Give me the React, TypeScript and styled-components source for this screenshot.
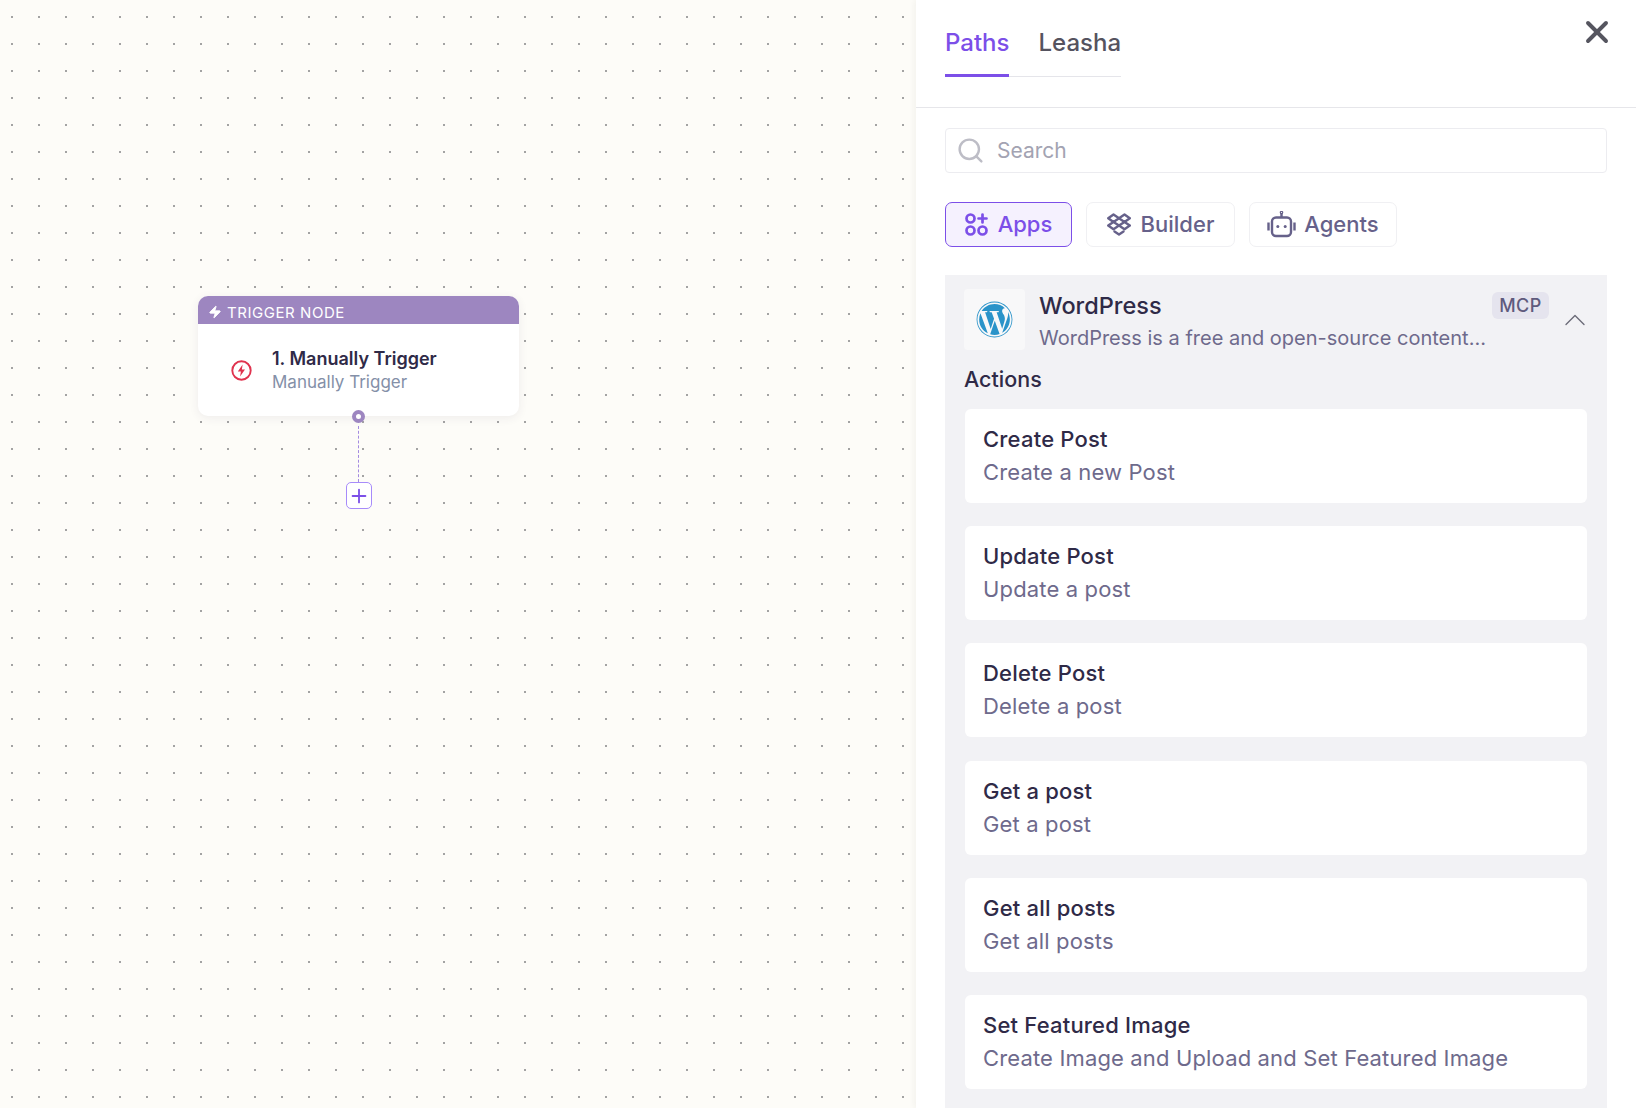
import styled, { createGlobalStyle } from 'styled-components'
import { Search, X, Zap, ChevronUp, Plus } from 'lucide-react'
import { FaWordpress } from 'react-icons/fa'

const GlobalStyle = createGlobalStyle`
    html, body {
        margin: 0;
        padding: 0;
        height: 100%;
        overflow: hidden;
    }
    body {
        font-family: Inter, "Noto Sans", sans-serif;
        color: #2f2a47;
    }
`

const Page = styled.div`
    display: flex;
    height: 1108px;
    width: 1636px;
    overflow: hidden;
`

const Canvas = styled.div`
    position: relative;
    width: 916px;
    flex-shrink: 0;
    background-color: #fdfcf8;
    background-image: radial-gradient(circle at 1px 1px, #a3a3a3 1px, transparent 1.2px);
    background-size: 27px 27px;
    background-position: 11px 16px;
`

const NodeStack = styled.div`
    position: absolute;
    left: 198px;
    top: 296px;
    width: 321px;
    display: flex;
    flex-direction: column;
    align-items: center;
`

const NodeCard = styled.div`
    width: 100%;
    height: 120px;
    border-radius: 10px;
    background: #fff;
    box-shadow: 0 2px 10px rgba(60, 50, 90, 0.08);
    overflow: hidden;
`

const NodeHeader = styled.div`
    display: flex;
    align-items: center;
    gap: 5px;
    height: 28px;
    box-sizing: border-box;
    padding: 4px 0 0 10px;
    background: #9d86c0;
    color: #fff;
    font-size: 15px;
    font-weight: 400;
    letter-spacing: 0.55px;
`

const NodeBody = styled.div`
    display: flex;
    align-items: center;
    gap: 20px;
    height: 92px;
    padding-left: 33px;
    box-sizing: border-box;
`

const NodeTexts = styled.div`
    display: flex;
    flex-direction: column;
    gap: 3px;
`

const NodeTitle = styled.div`
    font-size: 18px;
    line-height: 21px;
    font-weight: 600;
    color: #2f2a47;
`

const NodeSub = styled.div`
    font-size: 17px;
    line-height: 21px;
    color: #8490a8;
`

const Handle = styled.div`
    width: 5px;
    height: 5px;
    margin-top: -6px;
    border: 4px solid #9d86c0;
    border-radius: 50%;
    background: #fff;
    position: relative;
`

const Wire = styled.div`
    height: 56px;
    margin-top: 3px;
    border-left: 1px dashed #a48be0;
`

const AddButton = styled.button`
    display: flex;
    align-items: center;
    justify-content: center;
    width: 26px;
    height: 27px;
    padding: 0;
    border: 1px solid #a78bfa;
    border-radius: 5px;
    background: #fff;
    color: #7c4fe8;
`

const Panel = styled.div`
    flex: 1;
    display: flex;
    flex-direction: column;
    background: #fff;
    box-shadow: -2px 0 6px rgba(60, 50, 40, 0.05);
    position: relative;
`

const TopBar = styled.div`
    display: flex;
    justify-content: space-between;
    height: 108px;
    flex-shrink: 0;
    box-sizing: border-box;
    padding: 0 21px 0 29px;
    border-bottom: 1px solid #e6e6ea;
`

const Tabs = styled.div`
    display: flex;
    gap: 29px;
    height: 77px;
    box-sizing: border-box;
    border-bottom: 1px solid #e5e5ea;
`

const Tab = styled.div<{ $active?: boolean }>`
    height: 77px;
    box-sizing: border-box;
    padding-top: 28px;
    font-size: 24px;
    line-height: 30px;
    font-weight: 500;
    color: ${(p) => (p.$active ? '#7c4fe8' : '#55535f')};
    border-bottom: ${(p) => (p.$active ? '3px solid #7c4fe8' : 'none')};
`

const CloseButton = styled.div`
    display: flex;
    padding-top: 14px;
    color: #55555f;
    height: 36px;
`

const Body = styled.div`
    display: flex;
    flex-direction: column;
    flex: 1;
    min-height: 0;
    padding: 20px 29px 0;
`

const SearchBox = styled.div`
    display: flex;
    align-items: center;
    gap: 12px;
    height: 45px;
    flex-shrink: 0;
    box-sizing: border-box;
    padding-left: 10px;
    border: 1px solid #ececf0;
    border-radius: 4px;
    color: #bdbdc6;
`

const SearchText = styled.span`
    font-size: 21px;
    color: #a3a3b2;
`

const Chips = styled.div`
    display: flex;
    gap: 14px;
    margin-top: 29px;
    flex-shrink: 0;
`

const Chip = styled.div<{ $active?: boolean; $width: number; $gap: number }>`
    display: flex;
    align-items: center;
    justify-content: center;
    gap: ${(p) => p.$gap}px;
    height: 45px;
    box-sizing: border-box;
    padding-bottom: 1px;
    width: ${(p) => p.$width}px;
    border: 1px solid ${(p) => (p.$active ? '#7c4fe8' : '#f0f0f3')};
    border-radius: 7px;
    background: ${(p) => (p.$active ? '#f5f1fe' : '#fff')};
    color: ${(p) => (p.$active ? '#7c4fe8' : '#66618a')};
    font-size: 22px;
    font-weight: 500;
`

const Group = styled.div`
    flex: 1;
    margin-top: 28px;
    padding: 14px 20px 0 19px;
    background: #f2f2f5;
    display: flex;
    flex-direction: column;
    min-height: 0;
`

const AppRow = styled.div`
    display: flex;
    height: 61px;
    flex-shrink: 0;
`

const LogoTile = styled.div`
    display: flex;
    align-items: center;
    justify-content: center;
    width: 61px;
    height: 61px;
    flex-shrink: 0;
    border-radius: 4px;
    background: #f8f8f9;
    color: #2a93c9;
`

const AppTexts = styled.div`
    flex: 1;
    margin-left: 14px;
    display: flex;
    flex-direction: column;
    min-width: 0;
`

const AppName = styled.div`
    font-size: 23.5px;
    line-height: 30px;
    font-weight: 500;
    color: #2f2a47;
    margin-top: 2px;
`

const AppDesc = styled.div`
    font-size: 20px;
    line-height: 30px;
    margin-top: 2px;
    color: #6e6a8c;
    white-space: nowrap;
`

const Badge = styled.div`
    align-self: flex-start;
    display: flex;
    align-items: center;
    justify-content: center;
    width: 57px;
    height: 27px;
    margin-top: 3px;
    border-radius: 6px;
    background: #e5e4ee;
    color: #5f5a7d;
    font-size: 18px;
    font-weight: 500;
    letter-spacing: 0.5px;
`

const Chevron = styled.div`
    display: flex;
    align-items: center;
    justify-content: center;
    margin: 0 -6px 0 8px;
    width: 36px;
    color: #6b6b78;
`

const SectionTitle = styled.div`
    margin-top: 16px;
    font-size: 21.5px;
    line-height: 27px;
    font-weight: 500;
    color: #2f2a47;
`

const ActionList = styled.div`
    display: flex;
    flex-direction: column;
    gap: 23.2px;
    margin: 16px 0 0 1px;
`

const ActionCard = styled.div`
    height: 94px;
    flex-shrink: 0;
    box-sizing: border-box;
    padding: 15px 18px 0;
    border-radius: 6px;
    background: #fff;
`

const ActionTitle = styled.div`
    font-size: 22px;
    line-height: 30px;
    font-weight: 500;
    letter-spacing: 0.2px;
    color: #2f2a47;
`

const ActionDesc = styled.div`
    font-size: 22px;
    line-height: 30px;
    letter-spacing: 0.15px;
    margin-top: 3px;
    color: #6e6a8c;
`

const actions = [
    { title: 'Create Post', desc: 'Create a new Post' },
    { title: 'Update Post', desc: 'Update a post' },
    { title: 'Delete Post', desc: 'Delete a post' },
    { title: 'Get a post', desc: 'Get a post' },
    { title: 'Get all posts', desc: 'Get all posts' },
    { title: 'Set Featured Image', desc: 'Create Image and Upload and Set Featured Image' },
]

const AppsIcon = () => (
    <svg width="23" height="23" viewBox="0 0 23 23" fill="none" stroke="currentColor" strokeWidth="2.7" strokeLinecap="round">
        <circle cx="5.5" cy="5.5" r="4" />
        <circle cx="5.5" cy="17.5" r="4" />
        <circle cx="17.5" cy="17.5" r="4" />
        <path d="M17.5 1.5v8M13.5 5.5h8" />
    </svg>
)

const BuilderIcon = () => (
    <svg width="24" height="23" viewBox="0 0 24 23" fill="none" stroke="currentColor" strokeWidth="2.4" strokeLinejoin="round" strokeLinecap="round">
        <path d="M6.5 1.5 12 5.2 6.5 8.9 1.2 5.2z" />
        <path d="M17.5 1.5 22.8 5.2 17.5 8.9 12 5.2z" />
        <path d="M6.5 8.9 12 12.6 6.5 16.3 1.2 12.6z" />
        <path d="M17.5 8.9 22.8 12.6 17.5 16.3 12 12.6z" />
        <path d="M7.5 18.5 12 21.5l4.5-3" />
    </svg>
)

const RobotIcon = () => (
    <svg width="29" height="27" viewBox="0 0 29 27" fill="none" stroke="currentColor" strokeWidth="2.4" strokeLinecap="butt">
        <rect x="5" y="6.5" width="19" height="18.5" rx="4" />
        <path d="M14.5 6.5V2M1.5 11.5v8M27.5 11.5v8" />
        <circle cx="14.5" cy="1.6" r="0.6" />
        <circle cx="10.8" cy="15.5" r="1.5" fill="currentColor" stroke="none" />
        <circle cx="18.2" cy="15.5" r="1.5" fill="currentColor" stroke="none" />
    </svg>
)

const TriggerIcon = () => (
    <svg width="21" height="21" viewBox="0 0 21 21" fill="none">
        <circle cx="10.5" cy="10.5" r="9.2" stroke="#e0344f" strokeWidth="1.9" />
        <path d="M11.6 4.6 6.8 11.4h3.1l-.8 5 4.9-6.9h-3.1z" fill="#e0344f" />
    </svg>
)

const App = () => {
    return (
        <Page>
            <GlobalStyle />
            <Canvas>
                <NodeStack>
                    <NodeCard>
                        <NodeHeader>
                            <Zap size={14} fill="#fff" strokeWidth={1.5} />
                            TRIGGER NODE
                        </NodeHeader>
                        <NodeBody>
                            <TriggerIcon />
                            <NodeTexts>
                                <NodeTitle>1. Manually Trigger</NodeTitle>
                                <NodeSub>Manually Trigger</NodeSub>
                            </NodeTexts>
                        </NodeBody>
                    </NodeCard>
                    <Handle />
                    <Wire />
                    <AddButton>
                        <Plus size={22} strokeWidth={2} />
                    </AddButton>
                </NodeStack>
            </Canvas>
            <Panel>
                <TopBar>
                    <Tabs>
                        <Tab $active>Paths</Tab>
                        <Tab>Leasha</Tab>
                    </Tabs>
                    <CloseButton>
                        <X size={36} strokeWidth={2.6} />
                    </CloseButton>
                </TopBar>
                <Body>
                    <SearchBox>
                        <Search size={29} strokeWidth={2} />
                        <SearchText>Search</SearchText>
                    </SearchBox>
                    <Chips>
                        <Chip $active $width={127} $gap={10}>
                            <AppsIcon />
                            Apps
                        </Chip>
                        <Chip $width={149} $gap={10}>
                            <BuilderIcon />
                            Builder
                        </Chip>
                        <Chip $width={148} $gap={8}>
                            <RobotIcon />
                            Agents
                        </Chip>
                    </Chips>
                    <Group>
                        <AppRow>
                            <LogoTile>
                                <FaWordpress size={37} />
                            </LogoTile>
                            <AppTexts>
                                <AppName>WordPress</AppName>
                                <AppDesc>WordPress is a free and open-source content…</AppDesc>
                            </AppTexts>
                            <Badge>MCP</Badge>
                            <Chevron>
                                <ChevronUp size={36} strokeWidth={0.9} />
                            </Chevron>
                        </AppRow>
                        <SectionTitle>Actions</SectionTitle>
                        <ActionList>
                            {actions.map((a) => (
                                <ActionCard key={a.title}>
                                    <ActionTitle>{a.title}</ActionTitle>
                                    <ActionDesc>{a.desc}</ActionDesc>
                                </ActionCard>
                            ))}
                        </ActionList>
                    </Group>
                </Body>
            </Panel>
        </Page>
    )
}

export default App
